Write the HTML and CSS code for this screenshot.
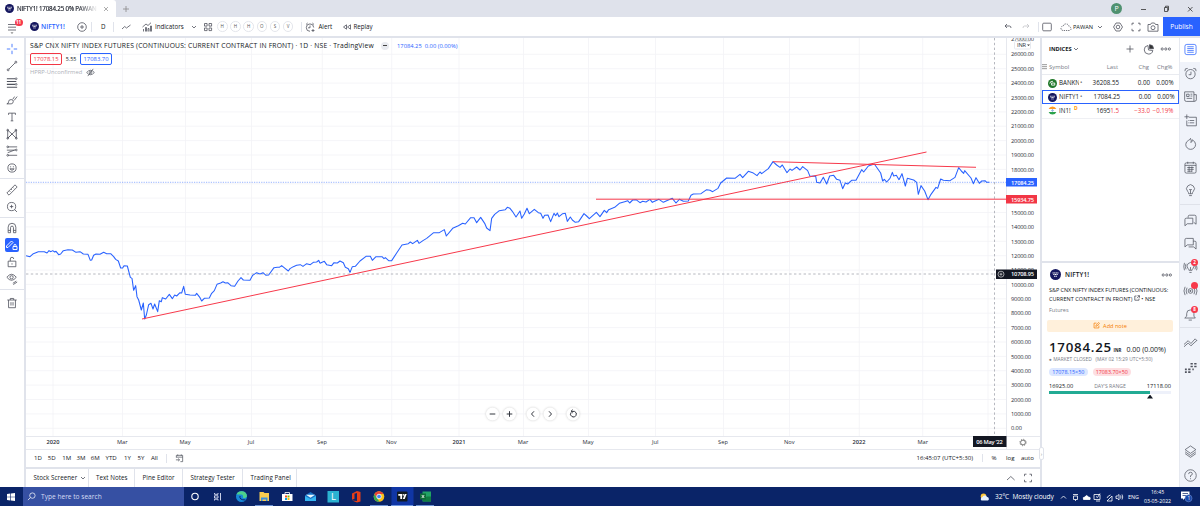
FILE: index.html
```html
<!DOCTYPE html>
<html lang="en">
<head>
<meta charset="utf-8">
<title>NIFTY1! 17084.25</title>
<link rel="stylesheet" href="styles.css">
</head>
<body>
<svg class="defs" aria-hidden="true">
  <symbol id="nifty" viewBox="0 0 10 10"><circle cx="5" cy="5" r="5" fill="#15175f"/><path d="M2.300 3.600h5.400M3 5h4M3.700 6.600h2.600" stroke="#fff" stroke-width=".9" stroke-dasharray="1.100 .35"/></symbol>
  <symbol id="chev" viewBox="0 0 6 6"><path d="M1 2l2 2 2-2"/></symbol>
  <symbol id="dots" viewBox="0 0 12 4"><circle cx="2.200" cy="2" r="1.100"/><circle cx="5.800" cy="2" r="1.100"/><circle cx="9.400" cy="2" r="1.100"/></symbol>
</svg>

<header class="tabs">
  <div class="tab"><svg class="s9"><use href="#nifty"/></svg><span class="tabname">NIFTY1! 17084.25 0% PAWAN</span><svg class="s6" viewBox="0 0 6 6"><path d="M1 1l4 4M5 1L1 5" stroke="#999"/></svg></div>
  <svg class="newtab" viewBox="0 0 8 8"><path d="M4 1v6M1 4h6"/></svg>
  <span class="avatar">P</span>
  <svg class="wins" viewBox="0 0 60 10"><path d="M3 5.500h5M26.500 3.500h3.200v4h-3.200zM27.500 3.500v-1.300h3v4h-.8M50 3l4.500 4.500M54.500 3L50 7.500"/></svg>
</header>

<nav class="toolbar">
  <span class="burger"><svg viewBox="0 0 16 14"><path d="M2 4.500h8M2 7.200h8M2 10h8"/><path d="M4.500 12.400h3l-1.500 1.400z" fill="#555" stroke="none"/></svg><b>11</b></span>
  <svg class="s9"><use href="#nifty"/></svg>
  <span class="sym">NIFTY1!</span>
  <svg class="s10" viewBox="0 0 10 10"><circle cx="5" cy="5" r="4.300"/><path d="M5 3v4M3 5h4"/></svg>
  <span class="bar center">D</span>
  <span class="bar center"><svg class="s10" viewBox="0 0 10 10"><path d="M1 7l2.700-2.500 1.800 1.500L9.500 3"/></svg></span>
  <span class="bar"><svg class="s10" viewBox="0 0 10 10"><path d="M1.500 9.500V7M3.500 9.500V5.500h1v4M6 9.500v-3h1v3M8.500 9.500V4h1v5.500M.5 5L4 2l2 1.500L9 .7"/></svg></span>
  <span class="ind">Indicators</span>
  <svg class="s6"><use href="#chev"/></svg>
  <svg class="s10" viewBox="0 0 10 10"><path d="M1.500 1.500h2.600v2.600H1.500zM6 1.500h2.600v2.600H6zM1.500 6h2.600v2.600H1.500zM6 6h2.600v2.600H6z"/></svg>
  <i>H</i><i>H</i><i>H</i><i>O</i><i>S</i><i>V</i>
  <span class="bar"><svg class="s10" viewBox="0 0 10 10"><path d="M5 9.300A3.700 3.700 0 1 1 8.700 5.500M5 3.500v2.300h-2M1 2.500L2.600 1M9 2.500L7.400 1M8 7v3M6.500 8.500h3"/></svg></span>
  <span class="alert">Alert</span>
  <svg class="s10" viewBox="0 0 10 10"><path d="M4.500 2.800v4.400L1.500 5zM8.500 2.800v4.400L5.500 5z"/></svg>
  <span class="replay">Replay</span>
  <svg class="s10" viewBox="0 0 10 10"><path d="M4 2L2 4l2 2M2 4h4.500q1.500 0 1.500 2"/></svg>
  <svg class="s10 faint" viewBox="0 0 10 10"><path d="M6 2l2 2-2 2M8 4H3.500Q2 4 2 6"/></svg>
  <span class="bar"><svg class="s10" viewBox="0 0 10 10"><rect x=".7" y="1.200" width="8.600" height="7.600" rx="1"/></svg></span>
  <svg class="cloud" viewBox="0 0 12 10"><path d="M3 8.500Q.7 8 1 6t2.400-2Q4 1.500 6.500 2t2.500 2.700q2 .3 2 2T9 8.500z" stroke-dasharray="1.300 .9"/></svg>
  <span class="pawan">PAWAN</span>
  <svg class="s6"><use href="#chev"/></svg>
  <svg class="s10" viewBox="0 0 10 10"><path d="M3 1h4l2.500 4L7 9H3L.5 5z"/><circle cx="5" cy="5" r="1.800"/></svg>
  <svg class="s10" viewBox="0 0 10 10"><path d="M1 3.200V1.200h2M7 1.200h2v2M9 6.800v2H7M3 8.800H1v-2"/></svg>
  <svg class="cam" viewBox="0 0 12 10"><path d="M1 2.500h2.500l1-1.500h3l1 1.500H11v6.700H1z"/><circle cx="6" cy="5.700" r="2"/></svg>
  <a class="publish">Publish</a>
</nav>

<main>
  <aside class="tools">
    <svg class="blue" viewBox="0 0 14 14"><path d="M7 1v4M7 9v4M1 7h4M9 7h4"/></svg>
    <svg viewBox="0 0 14 14"><path d="M3.300 10.700l7.400-7.400"/><circle cx="2.500" cy="11.500" r="1.100"/><circle cx="11.500" cy="2.500" r="1.100"/></svg>
    <svg viewBox="0 0 14 14"><path d="M1 2h9.500M1 5.300h11M1 8.600h9.500M1 12h12" stroke-width="1.200"/><circle cx="11.800" cy="2" r="1"/><circle cx="11.800" cy="8.600" r="1"/></svg>
    <svg viewBox="0 0 14 14"><path d="M1 11.500q2 0 2-2.500t3-2.500 2.500 2.500-2.500 2.500zM8 6l2-3M9.500 7.500L13 3"/></svg>
    <svg viewBox="0 0 14 14"><path d="M3 4.500v-2h8v2M7 2.500v9M5.500 11.500h3"/></svg>
    <svg viewBox="0 0 14 14"><path d="M2 12V2.500L7 7l5-4.500V12L7 7zM2 12L7 7"/><circle cx="2" cy="2.500" r="1"/><circle cx="11.500" cy="2.500" r="1"/><circle cx="2" cy="12" r="1"/><circle cx="12" cy="12" r="1"/></svg>
    <svg viewBox="0 0 14 14"><path d="M2.500 2.200H13M2.500 12H13M2 9l9-3.500M1 6h9" /><circle cx="2" cy="2.200" r="1"/><circle cx="2" cy="12" r="1"/><circle cx="12" cy="5.800" r="1"/></svg>
    <svg viewBox="0 0 14 14"><circle cx="7" cy="7" r="4.800"/><path d="M4.500 8q2.500 3.500 5 0zM5.400 5v1.200M8.600 5v1.200"/></svg>
    <hr>
    <svg viewBox="0 0 14 14"><path d="M1 10.500L10.500 1 13 3.500 3.500 13zM4 8l1 1M6 6l1 1M8 4l1 1"/></svg>
    <svg viewBox="0 0 14 14"><circle cx="6.500" cy="6.500" r="4.800"/><path d="M4.500 6.500h4M6.500 4.500v4M10 10l2.800 2.800"/></svg>
    <hr>
    <svg viewBox="0 0 14 14"><path d="M2.500 12.500V6a4.500 4.500 0 0 1 9 0v6.500H8.700V6.500a1.700 1.700 0 0 0-3.400 0v6zM2.500 9.800h2.800M8.700 9.800h2.800"/></svg>
    <svg class="on" viewBox="0 0 14 14"><path d="M1.500 8l5-5 1.500 1.500-5 5H1.500zM8 8.500h4v3H8zM9 8.500V7.300a1 1 0 0 1 2 0v1.200"/></svg>
    <svg viewBox="0 0 14 14"><path d="M2.500 6h9v6.500h-9zM5 6V3.500a2 2 0 0 1 4 0M7 8.500v1.500"/></svg>
    <svg viewBox="0 0 14 14"><path d="M1 5q5.500-7 11 0-5.500 7-11 0zM8 12l4-2.500M8.500 13.500l4.500-3"/><circle cx="6.500" cy="5" r="1.900"/></svg>
    <hr>
    <svg class="bin" viewBox="0 0 14 14"><path d="M1.500 3.500h11M3 3.500V12.500h8V3.500M5 3.500V1.700h4v1.800M5.800 6v4M8.200 6v4"/></svg>
  </aside>

  <section class="center-col">
    <div class="plot">
      <svg class="chart" viewBox="26 38 1014 411">
        <path class="grid" d="M26 413.900H1006M26 399.500H1006M26 385.100H1006M26 370.700H1006M26 356.400H1006M26 342H1006M26 327.600H1006M26 313.200H1006M26 298.800H1006M26 284.400H1006M26 270.100H1006M26 255.700H1006M26 241.300H1006M26 226.900H1006M26 212.500H1006M26 198.100H1006M26 183.800H1006M26 169.400H1006M26 155H1006M26 140.600H1006M26 126.200H1006M26 111.900H1006M26 97.500H1006M26 83.100H1006M26 68.700H1006M26 54.300H1006M26 428.300H1006"/>
        <path class="grid" d="M53 38V436M122.500 38V436M185.500 38V436M251.500 38V436M322.300 38V436M391.700 38V436M459 38V436M523.500 38V436M588.500 38V436M655.500 38V436M723.500 38V436M789.500 38V436M859.300 38V436M922.700 38V436M988 38V436"/>
        <path class="frame" d="M1006.500 38V449M26 436.500H1040"/>
        <path class="last" d="M26 182.300H1006"/>
        <path class="cross" d="M26 274H1006M994.500 38V436"/>
        <g class="price">
          <polyline transform="translate(0 230) scale(.33333)" points="78,77 90,80 100,71 115,65 133,65 141,69 147,62 153,65 158,62 164,66 168,64 176,74 182,72 190,62 204,59 217,60 228,67 240,65 250,72 264,73 271,91 275,90 281,76 288,72 300,73 311,67 320,71 332,71 341,80 347,88 355,93 362,114 368,114 372,107 382,108 391,142 396,145 401,181 407,167 411,200 416,210 424,240 430,219 434,267 439,255 446,224 453,220 459,237 464,222 473,245 478,212 484,215 487,203 497,207 508,193 517,206 524,195 530,198 540,188 545,189 551,169 556,193 570,195 586,196 590,190 600,203 605,213 613,205 628,204 635,190 643,182 651,163 662,159 669,155 676,159 683,158 693,167 704,169 714,153 723,143 730,150 750,151 758,136 770,128 780,132 789,128 798,136 806,135 822,113 832,112 838,112 845,107 855,115 865,123 870,116 880,110 890,106 901,104 909,109 920,101 931,104 940,97 950,96 956,91 960,100"/>
          <polyline transform="translate(320 180) scale(.33333)" points="0,250 13,244 20,254 35,257 42,248 52,249 60,243 70,248 76,262 85,266 90,277 97,260 106,259 120,243 138,229 151,229 157,241 168,230 186,230 192,236 196,233 206,242 215,242 230,219 246,195 265,191 271,186 278,191 292,181 297,190 310,181 320,175 341,158 358,158 373,149 379,168 398,145 415,137 428,130 436,132 452,113 462,113 470,128 482,112 494,130 500,144 510,152 515,115 524,103 538,92 556,89 562,82 570,85 577,94 588,111 600,93 605,115 613,102 621,85 628,101 643,88 655,98 662,100 669,115 674,106 684,105 692,125 702,100 707,107 712,99 717,110 728,101 736,100 742,124 751,111 757,120 766,127 776,125 792,101 800,108 808,116 829,97 840,110 853,91 860,98 866,89 884,82 898,70 914,65 923,62 929,69 938,60 948,59 960,68 968,64 978,66 990,58"/>
          <polyline transform="translate(620 140) scale(.33333)" points="90,178 97,187 107,182 117,178 130,187 140,182 157,175 168,189 178,178 190,184 205,183 213,166 220,162 243,161 260,149 270,151 278,155 294,145 302,129 320,114 345,115 360,103 368,113 385,94 398,98 411,107 420,96 425,101 445,86 459,65 470,75 480,82 487,75 501,98 510,87 516,91 530,81 540,90 548,80 563,92 570,109 587,108 590,127 600,129 610,112 620,132 629,108 641,106 650,118 660,121 668,146 676,129 683,132 695,121 708,121 725,89 731,96 745,78 763,72 782,99 788,123 793,118 800,126 810,115"/>
          <polyline transform="translate(820 140) scale(.33333)" points="210,115 217,97 221,108 229,106 237,119 246,101 256,138 262,115 281,120 290,127 295,163 303,137 314,153 324,179 333,163 348,142 353,145 362,117 370,121 390,122 405,112 416,83 424,93 431,100 434,92 453,114 460,131 468,113 478,130 485,123 495,122 500,127 508,127"/>
          <polyline transform="translate(0 230) scale(.33333)" points="960,100 960,100"/>
        </g>
        <path class="trend" d="M142 319L926.500 152M773 161.700L976 167.300M596 199.200H1006"/>
        <g class="axis">
          <text x="1011" y="41" textLength="23">27000.00</text>
          <text x="1011" y="56.400" textLength="23">26000.00</text><text x="1011" y="70.800" textLength="23">25000.00</text><text x="1011" y="85.200" textLength="23">24000.00</text><text x="1011" y="99.600" textLength="23">23000.00</text><text x="1011" y="114" textLength="23">22000.00</text><text x="1011" y="128.400" textLength="23">21000.00</text><text x="1011" y="142.800" textLength="23">20000.00</text><text x="1011" y="157.200" textLength="23">19000.00</text><text x="1011" y="171.600" textLength="23">18000.00</text>
          <text x="1011" y="214.700" textLength="23">15000.00</text><text x="1011" y="229.100" textLength="23">14000.00</text><text x="1011" y="243.500" textLength="23">13000.00</text><text x="1011" y="257.900" textLength="23">12000.00</text><text x="1011" y="272.300" textLength="23">11000.00</text><text x="1011" y="286.700" textLength="23">10000.00</text>
          <text x="1011" y="301" textLength="20">9000.00</text><text x="1011" y="315.400" textLength="20">8000.00</text><text x="1011" y="329.800" textLength="20">7000.00</text><text x="1011" y="344.200" textLength="20">6000.00</text><text x="1011" y="358.600" textLength="20">5000.00</text><text x="1011" y="373" textLength="20">4000.00</text><text x="1011" y="387.300" textLength="20">3000.00</text><text x="1011" y="401.700" textLength="20">2000.00</text><text x="1011" y="416.100" textLength="20">1000.00</text><text x="1011" y="430.300" textLength="11">0.00</text>
        </g>
        <rect x="1014.500" y="41.500" width="16" height="7.500" rx="1" fill="#fff" stroke="#e0e3eb"/>
        <text class="inr" x="1017" y="47.300" textLength="9">INR</text><path d="M1027 44.500h3l-1.500 1.500z" fill="#333"/>
        <rect x="1006" y="178" width="31" height="8.500" fill="#2962ff"/><text class="tag" x="1011" y="184.500" textLength="23">17084.25</text>
        <rect x="1006" y="195" width="31" height="8.500" fill="#f23645"/><text class="tag" x="1011" y="201.500" textLength="23">15934.75</text>
        <rect x="996" y="269.500" width="41" height="9.500" fill="#131722"/><circle cx="1001" cy="274.200" r="3" fill="none" stroke="#fff" stroke-width=".6"/><path d="M999.500 274.200h3M1001 272.700v3" stroke="#fff" stroke-width=".6"/><text class="tag" x="1011" y="276.400" textLength="23">10708.95</text>
        <g class="axis mid">
          <text class="yr" x="53" y="444.200">2020</text><text x="122.300" y="444.200">Mar</text><text x="185" y="444.200">May</text><text x="251" y="444.200">Jul</text><text x="322" y="444.200">Sep</text><text x="391.300" y="444.200">Nov</text><text class="yr" x="459" y="444.200">2021</text><text x="523" y="444.200">Mar</text><text x="588" y="444.200">May</text><text x="655.300" y="444.200">Jul</text><text x="723" y="444.200">Sep</text><text x="789.300" y="444.200">Nov</text><text class="yr" x="859" y="444.200">2022</text><text x="922.700" y="444.200">Mar</text>
        </g>
        <rect x="973" y="436" width="33.500" height="11" fill="#131722"/><text class="tag" x="976.300" y="444.200" textLength="26.500">06 May '22</text>
        <circle cx="1023" cy="442.500" r="2.400" fill="none" stroke="#555" stroke-width=".8"/><circle cx="1023" cy="442.500" r="3.200" fill="none" stroke="#555" stroke-width=".8" stroke-dasharray="1 1.510"/>
        <g class="pads"><circle cx="492.500" cy="414" r="6.500"/><circle cx="509.500" cy="414" r="6.500"/><circle cx="533" cy="414" r="6.500"/><circle cx="550" cy="414" r="6.500"/><circle cx="573" cy="414" r="6.500"/></g>
        <path class="padicons" d="M489.700 414h5.600M506.700 414h5.600M509.500 411.200v5.600M534 411.300l-2.500 2.700 2.500 2.700M549 411.300l2.500 2.700-2.500 2.700M571 412.500a2.900 2.900 0 1 0 3.500-1.100h-3M572.700 409.700l-1.700 1.600 1.700 1.600"/>
      </svg>
      <div class="legend">
        <div class="l1"><span class="name">S&amp;P CNX NIFTY INDEX FUTURES (CONTINUOUS: CURRENT CONTRACT IN FRONT) · 1D · NSE · TradingView</span><em></em><span class="val">17084.25&nbsp; 0.00 (0.00%)</span></div>
        <div class="l2"><span class="sell">17078.15</span><span class="spread">5.55</span><span class="buy">17083.70</span></div>
        <div class="l3"><span>HPRP-Unconfirmed</span><svg class="s9" viewBox="0 0 10 10"><path d="M.7 5q4.300-5 8.600 0-4.300 5-8.600 0zM2 9l6-8"/><circle cx="5" cy="5" r="1.400"/></svg></div>
      </div>
    </div>
    <div class="ranges">
      <span>1D</span><span>5D</span><span>1M</span><span>3M</span><span>6M</span><span>YTD</span><span>1Y</span><span>5Y</span><span>All</span>
      <span class="goto"><svg class="s9" viewBox="0 0 10 10"><path d="M1.500 4V1.500h7v7H6M1.500 3.500h7M3 .5v1.500M7 .5v1.500M1 6.500h4M3.500 5L5 6.500 3.500 8"/></svg></span>
      <span class="clock">16:45:07 (UTC+5:30)</span><span class="scale">%</span><span>log</span><span>auto</span>
    </div>
    <div class="panels">
      <span>Stock Screener<svg class="s6"><use href="#chev"/></svg></span><span>Text Notes</span><span>Pine Editor</span><span>Strategy Tester</span><span>Trading Panel</span>
      <svg class="pico" viewBox="0 0 30 10"><path d="M2 7l3.800-3.500L9.600 7M19.500 3.200v-2h2M24.500 1.200h2v2M26.500 6.800v2h-2M21.500 8.800h-2v-2"/></svg>
    </div>
  </section>

  <section class="side">
    <div class="watch">
      <div class="whead"><b>INDICES</b><svg class="s6"><use href="#chev"/></svg><svg class="plus" viewBox="0 0 8 8"><path d="M4 .5v7M.5 4h7"/></svg><svg class="s11" viewBox="0 0 11 11"><path d="M5 1.500a4.300 4.300 0 1 0 4.800 5L5.500 6z"/><path d="M6.500.7v4h4A4 4 0 0 0 6.500.7z" fill="#333"/></svg><svg class="more"><use href="#dots"/></svg></div>
      <div class="row cols"><span class="grip"></span><span class="cs">Symbol</span><span>Last</span><span>Chg</span><span>Chg%</span></div>
      <div class="row"><svg class="s9" viewBox="0 0 10 10"><circle cx="5" cy="5" r="5" fill="#22792b" stroke="none"/><path d="M2 5q0-2.500 3.500-2.500M4 4.500h3.500v2.300H4z" fill="none" stroke="#fff" stroke-width="1"/></svg><span class="n">BANKN</span><span class="d">•</span><span>36208.55</span><span>0.00</span><span>0.00%</span></div>
      <div class="row sel"><svg class="s9"><use href="#nifty"/></svg><span class="n">NIFTY1</span><span class="d">•</span><span>17084.25</span><span>0.00</span><span>0.00%</span></div>
      <div class="row last-row"><svg class="s9" viewBox="0 0 10 10"><path d="M.7 3.400a4.600 4.600 0 0 1 8.600 0z" fill="#ff9b26" stroke="none"/><path d="M.7 6.600a4.600 4.600 0 0 0 8.600 0z" fill="#2ba24c" stroke="none"/><circle cx="5" cy="5" r=".8" stroke="#4b80c9"/></svg><span class="n">IN1!</span><sup>D</sup><span>1695<span class="red">1.5</span></span><span class="red">−33.0</span><span class="red">−0.19%</span></div>
    </div>
    <div class="detail">
      <div class="dhead"><svg class="s11"><use href="#nifty"/></svg><b>NIFTY1!</b><svg class="more"><use href="#dots"/></svg></div>
      <p class="desc"><span class="da">S&amp;P CNX NIFTY INDEX FUTURES (CONTINUOUS:</span><span class="db">CURRENT CONTRACT IN FRONT) <svg class="ext" viewBox="0 0 6 6"><path d="M2.500 1H.8v4.200H5V3.500M3.500.7h2v2M5.500.7L3 3.200"/></svg> • NSE</span></p>
      <p class="kind">Futures</p>
      <div class="note"><svg class="s7" viewBox="0 0 8 8"><path d="M4 1.300H1.200v5.500h5.500V4M3.200 5l.3-1.500L6.500.6l1 1-3 3z"/></svg>Add note</div>
      <div class="quote"><b>17084.25</b><small>INR</small><span>0.00 (0.00%)</span></div>
      <p class="closed">● MARKET CLOSED &nbsp; (MAY 02 15:29 UTC+5:30)</p>
      <div class="ba"><span class="bid">17078.15×50</span><span class="ask">17083.70×50</span></div>
      <div class="dr"><span>16925.00</span><span class="drn">DAY'S RANGE</span><span>17118.00</span></div>
      <div class="meter"><div style="width:82.500%"></div></div>
      <div class="ptr"></div>
    </div>
    <span class="handle">›</span>
  </section>

  <aside class="rail">
    <span class="act"><svg class="blue" viewBox="0 0 14 14"><rect x="1" y="1.500" width="12" height="11" rx="2"/><path d="M3.500 4h7M3.500 6h7M3.500 8h7M3.500 10h7"/></svg></span>
    <span><svg viewBox="0 0 14 14"><circle cx="7" cy="7.700" r="5"/><path d="M7.500 5v3.300H5M1 4.500q-.5-3.500 3-3M13 4.500q.5-3.500-3-3"/></svg></span>
    <span><svg viewBox="0 0 14 14"><path d="M.7 2h10v10.300H2.500Q.7 12.300.7 10.500zM10.700 5h2.600v5.500q0 1.800-2.600 1.800M2.800 4.500h2.700V7H2.800zM7 4.500h2M7 6.500h2M2.800 9h6"/></svg></span>
    <span><svg viewBox="0 0 14 14"><path d="M5.500 3.500h7.800v9.200H3V7M3 .5v5M.5 3h5M6 7h5M6 9.500h5M4.500 7h.6M4.500 9.500h.6"/></svg></span>
    <span><svg viewBox="0 0 14 14"><path d="M7 1.500q1.300 2.500.5 4.500 1.500-1 1.500-3 3.500 2 3.500 5a5.300 5.300 0 0 1-10.600 0q0-3 3.100-4.500Q6.500 3 7 1.500z"/></svg></span>
    <span><svg viewBox="0 0 14 14"><rect x="1" y="2" width="12" height="11" rx="1.500"/><path d="M1 4.700h12M4 .8V3M10 .8V3M3.500 7h7M3.500 9h7M3.500 11h5" stroke-dasharray="none"/><path d="M5.500 5.800v6M8.500 5.800v6"/></svg></span>
    <span><svg viewBox="0 0 14 14"><path d="M5 10.500Q5 9 4 8a4.200 4.200 0 1 1 6 0q-1 1-1 2.500zM5.500 12.500h3M7 6.500v4M5.500 6h3"/></svg></span>
    <hr>
    <span class="first"><svg viewBox="0 0 14 14"><path d="M4.500 4V2.800q0-1.500 1.500-1.500h5.500q1.500 0 1.500 1.500V11l-2.500-2M1 12.700V6q0-1.500 1.500-1.500h7v6H3.500z"/></svg></span>
    <span><svg viewBox="0 0 14 14"><path d="M1 10.700V3q0-1.500 1.500-1.500H10v7H3.500zM10 4.500h1.700q1.300 0 1.300 1.300V13l-2.500-2.300H5"/></svg></span>
    <span class="badge"><svg viewBox="0 0 14 14"><path d="M5.300 10Q5.300 9 4.300 8a3.700 3.700 0 1 1 5.400 0q-1 1-1 2zM5.800 12.300h2.400M7 6.500V9.500M2.200 3q-1.500 3 0 6M.5 2q-1.500 4 0 8M11.800 5q1 2 0 4M13.500 5q1 3 0 5"/></svg><b>2</b></span>
    <span class="badge"><svg viewBox="0 0 14 14"><circle cx="7" cy="7.500" r="2.500"/><path d="M6.400 6.700v1.600l1.400-.8zM3.300 4q-2 3.500 0 7M1.200 3q-2.500 4.500 0 9M10.700 4q2 3.500 0 7M12.800 3q2.500 4.500 0 9"/></svg><b></b></span>
    <span class="badge"><svg viewBox="0 0 14 14"><path d="M.8 10.800h11.400L10.700 8.800V6a3.900 3.900 0 0 0-7.800 0v2.800zM5 13h3.500"/></svg><b>8</b></span>
    <hr>
    <span class="first"><svg viewBox="0 0 14 14"><path d="M0 8l4.500-4 3 3L12 2l2 2M0 10.500L4.500 6.500l3 3L14 3.500"/></svg></span>
    <span><svg viewBox="0 0 14 14"><path d="M1 12h2M4.500 12h2.500M1 9h2M4.500 9h2.500M7 3h2.500M11 3h2.500M7 6h2.500M11 6h2.500M9 9h1.500" stroke-width="1.700"/></svg></span>
    <span class="layers"><svg viewBox="0 0 14 14"><path d="M7 1l5.800 4L7 9 1.200 5zM1.200 7.300L7 11.300l5.800-4M1.200 9.300L7 13.300l5.800-4"/></svg></span>
    <span><svg viewBox="0 0 14 14"><circle cx="7" cy="7" r="6.200"/><path d="M5 5.500q0-2 2-2t2 1.700Q9 6.500 7 7.200v1.500M7 10v1"/></svg></span>
  </aside>
</main>

<footer class="taskbar">
  <svg class="win" viewBox="0 0 9 9"><path d="M0 1.200l3.800-.6v3.600H0zM4.500.5L9 0v4.200H4.500zM0 4.900h3.800v3.600L0 7.900zM4.500 4.900H9V9l-4.500-.5z" fill="#fff" stroke="none"/></svg>
  <div class="search"><svg class="s9" viewBox="0 0 10 10"><circle cx="6" cy="4" r="3"/><path d="M3.800 6.200L1 9"/></svg>Type here to search</div>
  <svg class="apps" viewBox="184 487 256 19">
    <circle cx="195" cy="496.500" r="3.200" stroke="#fff" stroke-width="1.100"/>
    <path d="M214.500 493v1.300h3.500V493M214.500 500.500v-1.300h3.500v1.300M214.500 495.800h3.500v2.200h-3.500zM220.500 493v7.500" stroke="#dce2f5" stroke-width=".9"/>
    <circle cx="241.500" cy="496.500" r="5.500" fill="#1788d8"/><path d="M236.500 494.500a5.500 5.500 0 0 1 10.500 2q-1 2-4 1.200.5-3.200-2-3.200t-4.500 0z" fill="#4ed08a"/><path d="M240 496q-1 4 5.500 4" stroke="#0a2468" stroke-width="1"/>
    <path d="M259.500 492h4l1 1h4.500v8h-9.500z" fill="#f8cb50"/><path d="M261 497.500h6.500v3.500h-1.500v-1.500h-3.500v1.500H261z" fill="#3c8fdd"/>
    <path d="M282 494h10.500v7H282z" fill="#fff"/><path d="M285 494v-1.500h4.500v1.500" stroke="#fff"/><path d="M285 495.500h2v2h-2z" fill="#f25022"/><path d="M287.500 495.500h2v2h-2z" fill="#7fba00"/><path d="M285 498h2v2h-2z" fill="#00a4ef"/><path d="M287.500 498h2v2h-2z" fill="#ffb900"/>
    <path d="M305 495.500l5.500-3.500 5.500 3.500v5.500h-11z" fill="#1671c6"/><path d="M305 496l5.500 3 5.500-3v5h-11z" fill="#35b5f2"/><path d="M306 494.800h9l-4.500 3z" fill="#eaf7ff"/>
    <rect x="327.500" y="491" width="11.500" height="11.500" fill="#2bb2d1"/><text x="331" y="500.200">L</text>
    <path d="M352 493.500l5-2.500 3.500 1v9.500l-3.500 1-5-2 5 .5v-8l-2.500.8v5l-2.500 1z" fill="#e63e18"/>
    <circle cx="379" cy="496.500" r="5.300" fill="#fbc116"/><path d="M374.400 493.900a5.300 5.300 0 0 1 9.200 0H379l-2.300 4z" fill="#e94335"/><path d="M374.400 493.900l2.500 4.300 2.600 3.600a5.300 5.300 0 0 1-5.100-7.900z" fill="#34a853"/><circle cx="379" cy="496.500" r="2.300" fill="#4285f4" stroke="#fff" stroke-width=".8"/>
    <rect x="391.500" y="487" width="22" height="19" fill="#1036a5"/><rect x="397" y="491.500" width="10.500" height="10" rx="1" fill="#111a22"/><path d="M398.300 494h3.800v5h-1.800v-3.200h-2zM404.700 494h2l-2 5h-1.800z" fill="#fff"/><circle cx="403.300" cy="494.900" r=".8" fill="#fff"/>
    <path d="M422.500 491.500h8.500v10h-8.500z" fill="#21a366"/><path d="M427 496.500h4v5h-8v-3z" fill="#107c41"/><path d="M420 493.500h6v6h-6z" fill="#0d6b38"/><path d="M421.800 495l2.400 3M424.200 495l-2.400 3" stroke="#fff" stroke-width=".8"/>
    <path d="M255 505.500h18M370 505.500h18M391 505.500h22M416 505.500h18" stroke="#86b0ef"/>
  </svg>
  <svg class="weather" viewBox="0 0 10 8"><circle cx="3.500" cy="3.300" r="2.800" fill="#ffc83c"/><path d="M1.500 7.500a2 2 0 0 1 1-3.500 2.500 2.500 0 0 1 4.500 0 1.900 1.900 0 0 1 1 3.500z" fill="#e5f1ff"/></svg>
  <span class="wx">32°C&nbsp; Mostly cloudy</span>
  <svg class="tray" viewBox="0 0 64 10"><path d="M1 6.500L3.500 4 6 6.500M13 2.500h5M13.500 4h4v3.500h-4zM15.500 7.500V9M34 2.500h6v5h-6zM36 9h4M36 4.500l1.500 1L40 1.500M47 9l5-5v5zM47 6q1-2.500 3.500-3M56 4v2.500h1.300L59 8V2.500L57.300 4zM60.500 3.500q1 1.500 0 3M62 2.500q1.500 2.500 0 5"/><path d="M23.500 7.500q-1-2.500 1.300-2.500 1.700-3 3.700 0 2.500 0 1.500 2.500z" fill="#fff"/></svg>
  <span class="eng">ENG</span>
  <span class="time">16:45<br>03-05-2022</span>
  <svg class="notif" viewBox="0 0 13 14"><path d="M1 1.500h8.500v7H4.500L3 10V8.500H1z" fill="#fff" stroke="none"/><path d="M2.500 3.500h5.500M2.500 5.500h4" stroke="#0a2468" stroke-width=".7"/><circle cx="8.500" cy="8.300" r="3.500" fill="#1b48a8" stroke="#7d9ddd" stroke-width=".5"/><text x="7.400" y="10.200">1</text></svg>
</footer>
</body>
</html>
```
FILE: styles.css
```css
* { box-sizing: border-box; }
body { margin: 0; width: 1200px; height: 506px; overflow: hidden; background: #fff; color: #131722; font: 6.2px/8px "Open Sans", "Noto Sans", sans-serif; display: flex; flex-direction: column; white-space: nowrap; }
svg { display: block; flex: none; fill: none; stroke: #50535e; stroke-width: .8; }
p { margin: 0; }
i, em { font-style: normal; }
hr { border: 0; border-top: 1px solid #e0e3eb; margin: 0; width: 100%; }
.defs { position: absolute; width: 0; height: 0; }
use[href="#nifty"] { stroke: none; }
.s6 { width: 6px; height: 6px; } .s7 { width: 7px; height: 7px; } .s9 { width: 9px; height: 9px; } .s10 { width: 10px; height: 10px; } .s11 { width: 11px; height: 11px; }
.blue { stroke: #2962ff; } .red { color: #f23645; } .faint { opacity: .35; }

.tabs { height: 17px; background: #dfe2eb; display: flex; align-items: center; flex: none; }
.tab { width: 116px; height: 17px; background: #fff; border-radius: 0 3px 0 0; display: flex; align-items: center; padding-left: 5px; }
.tabname { width: 81px; margin: 0 5px 0 3px; letter-spacing: -.16px; font-weight: 500; -webkit-text-stroke: .15px #131722; overflow: hidden; -webkit-mask-image: linear-gradient(90deg, #000 75%, transparent); mask-image: linear-gradient(90deg, #000 75%, transparent); }
.newtab { width: 8px; height: 8px; margin-left: 6px; stroke: #888; }
.avatar { width: 11px; height: 11px; border-radius: 50%; background: #4f9170; color: #fff; text-align: center; line-height: 11px; font-size: 7px; margin-left: 981px; }
.wins { width: 60px; height: 10px; margin-left: 16px; stroke: #333; }

.toolbar { height: 21px; flex: none; border-bottom: 2px solid #e0e3eb; display: grid; grid-template-columns: 30px 11px 36px 17px 22px 25px 14px 36px 12px 14px repeat(5, 13.200px) 21px 14.500px 24px 11px 649.500px 18px 20px 19px 13px 24px 16px 18px 16px 16px 1fr; align-items: center; }
.burger { position: relative; }
.burger svg { width: 16px; height: 14px; margin-left: 6px; }
.burger b { position: absolute; left: 14.500px; top: -1px; width: 8px; height: 7px; border-radius: 4px; background: #f7394b; color: #fff; font-size: 4.500px; line-height: 7px; text-align: center; }
.sym { color: #2962ff; font-weight: 600; font-size: 6.600px; }
.bar { border-left: 1px solid #e0e3eb; height: 10px; line-height: 10px; padding-left: 3px; margin-left: -3px; }
.bar.center { padding-left: 9px; }
.bar.center + .bar.center { padding-left: 7px; }
.bar.center + .bar:not(.center) { border-left-color: transparent; }
.toolbar i { width: 10.500px; height: 10.500px; border: 1px solid #e4e6ec; border-radius: 50%; text-align: center; font-size: 4.500px; line-height: 8.500px; color: #555; }
.alert, .replay, .ind { font-size: 6.200px; }
.cloud, .cam { width: 12px; height: 10px; }
.pawan { font-size: 5.700px; }
.publish { align-self: stretch; background: #2962ff; color: #fff; line-height: 19px; text-align: center; font-size: 6.600px; }

main { display: grid; grid-template-columns: 26px 1014px 139px 21px; height: 449px; flex: none; }
.tools { border-right: 2px solid #e0e3eb; display: flex; flex-direction: column; align-items: center; padding-top: 3px; }
.tools svg { width: 12px; height: 12px; margin: 2.400px 0 2.520px; stroke-width: .95; }
.tools hr { margin: 1.500px 0 2.500px; }
.tools .on { background: #2962ff; stroke: #fff; border-radius: 2px; width: 14px; height: 14px; margin: 1.400px 0 1.500px; }
.tools .bin { margin-top: 4px; }

.center-col { display: flex; flex-direction: column; min-width: 0; }
.plot { position: relative; height: 411px; }
.chart { width: 1014px; height: 411px; stroke: none; }
.grid { stroke: #f2f3f6; stroke-width: .8; }
.frame { stroke: #e6e8ee; stroke-width: 1; }
.last { stroke: #2962ff; stroke-width: .6; stroke-dasharray: 1.200 1.200; opacity: .8; }
.cross { stroke: #a3a6ae; stroke-width: .8; stroke-dasharray: 2.400 2.400; }
.price { stroke: #2962ff; stroke-width: 3.200; stroke-linejoin: round; }
.trend { stroke: #f7394b; stroke-width: 1; }
.axis text, .inr { fill: #2a2e39; font-size: 5.700px; }
.mid text { text-anchor: middle; }
.axis .yr { font-weight: 600; }
.tag { fill: #fff; font-size: 5.700px; font-weight: 600; }
.pads circle { fill: #fff; filter: drop-shadow(0 .5px 1px #ccc); }
.padicons { stroke: #33363f; stroke-width: 1; }
.legend { position: absolute; left: 4px; top: 2px; }
.l1, .l2, .l3 { display: flex; align-items: center; }
.l1 { height: 11px; }
.name { width: 344px; font-size: 6.750px; letter-spacing: .185px; }
.l1 em { width: 8px; height: 8px; border-radius: 50%; background: #e9ebf0; margin: 0 8px 0 7px; }
.l1 em::after { content: ""; display: block; width: 4px; height: 1px; margin: 3.500px 2px; background: #444; }
.val { color: #2962ff; font-size: 5.800px; }
.l2 { height: 14px; margin-top: 1px; }
.sell, .buy { width: 32px; height: 12px; line-height: 10.500px; text-align: center; border: 1px solid #f23645; color: #f23645; border-radius: 2px; font-size: 5.900px; }
.buy { border-color: #2962ff; color: #2962ff; }
.spread { width: 18px; text-align: center; font-size: 5.300px; }
.l3 { height: 12px; color: #adb0b8; gap: 4px; }
.l3 span { width: 52px; font-size: 5.800px; }

.ranges { height: 20px; border-top: 1px solid #e6e8ee; border-bottom: 2px solid #e0e3eb; display: grid; grid-template-columns: 13.700px 14.500px 14.300px 14.300px 14.700px 18.500px 13.500px 13.500px 15.500px 750px 75px 14.500px 15px 1fr; padding-left: 8px; padding-bottom: 1px; align-items: center; font-size: 6.100px; }
.goto, .scale { border-left: 1px solid #e0e3eb; padding-left: 8px; }
.scale { margin-left: -9px; }
.panels { height: 18px; display: flex; font-size: 6.200px; letter-spacing: .07px; }
.panels span { border-right: 1px solid #e0e3eb; line-height: 18px; padding: 0 7.500px; display: flex; align-items: center; gap: 3px; }
.panels span:nth-child(1) { width: 62.500px; padding-right: 0; } .panels span:nth-child(2) { width: 46.500px; } .panels span:nth-child(3) { width: 48px; } .panels span:nth-child(4) { width: 60px; } .panels span:nth-child(5) { width: 54px; }
.pico { width: 30px; height: 10px; margin: 4px 5px 0 auto; }

.side { position: relative; border-left: 2px solid #e0e3eb; display: flex; flex-direction: column; }
.handle { position: absolute; left: -3px; top: 409px; width: 5px; height: 13px; line-height: 12px; border: 1px solid #e0e3eb; border-radius: 2px; background: #fff; color: #888; text-align: center; font-size: 5px; }
.watch { height: 225px; border-bottom: 2px solid #e0e3eb; }
.whead { height: 22px; padding: 0 7px; display: flex; align-items: center; }
.whead b { width: 24px; font-size: 5.700px; }
.plus { width: 8px; height: 8px; margin: 0 9px 0 47px; }
.more { width: 12px; height: 4px; margin-left: auto; }
.row { height: 14.200px; display: grid; grid-template-columns: 11px 24px 5px 31px 31px 23.500px; padding-left: 6px; align-items: center; font-size: 6.200px; }
.row > span { text-align: right; }
.row > span.n { text-align: left; overflow: hidden; width: 19.500px; }
.row > span.d { text-align: left; color: #777; margin-left: -3px; }
.row sup { font-size: 5px; line-height: 5px; font-weight: 700; color: #ff9800; margin: -5px 0 0 -9px; }
.cols { height: 15px; border-bottom: 1px solid #e9ebf0; margin-bottom: 1px; grid-template-columns: 7px 33px 36px 31px 23.500px; padding-left: 0; color: #787b86; font-size: 5.900px; }
.row > span.cs { text-align: left; }
.grip { width: 5px; height: 6px; background: repeating-linear-gradient(#aaa 0 1px, #eee 1px 2px); }
.sel { border: 1px solid #2962ff; padding-left: 5px; }
.sel > :nth-last-child(-n+3) { margin-right: -1px; position: relative; }
.last-row { border-bottom: 1px solid #eff0f4; }
.detail { padding: 3px 6px; }
.dhead { height: 17px; display: flex; align-items: center; gap: 4px; margin-left: 2px; }
.dhead b { font-size: 6.400px; font-weight: 600; letter-spacing: .15px; }
.desc { font-size: 5.500px; line-height: 8.700px; height: 17.500px; margin: 3px 0 0 1px; }
.desc span { display: block; }
.da { letter-spacing: -.05px; }
.db { letter-spacing: .05px; }
.ext { display: inline; width: 6px; height: 6px; }
.kind { color: #787b86; font-size: 5.500px; margin: 2px 0 0 1px; }
.note { height: 12px; background: #fff0db; color: #f57c00; border-radius: 2px; display: flex; align-items: center; justify-content: center; gap: 3px; margin: 6px 0 0 -1px; font-size: 5.600px; width: 126px; }
.note svg { stroke: #f57c00; }
.quote { height: 18px; margin: 6px 0 0 1px; display: flex; align-items: baseline; line-height: 18px; }
.quote b { font-size: 13.300px; font-weight: 600; letter-spacing: .75px; width: 64.500px; }
.quote small { font-size: 4.300px; font-weight: 700; width: 13px; }
.quote span { font-size: 7px; }
.closed { color: #787b86; font-size: 4.900px; line-height: 6px; margin-left: 1px; }
.ba { display: flex; gap: 5px; margin: 6px 0 6px 1px; }
.ba span { width: 38.500px; height: 8.500px; border-radius: 4px; text-align: center; font-size: 5.400px; line-height: 8.500px; }
.bid { background: #dce7ff; color: #2962ff; } .ask { background: #fddfe2; color: #f23645; }
.dr { width: 122px; margin-left: 1px; display: flex; justify-content: space-between; font-size: 5.700px; }
.drn { color: #787b86; font-size: 5.100px; }
.meter { width: 122px; height: 2.500px; margin: 1px 0 0 1px; background: #eef1fa; }
.meter div { height: 100%; background: #22ab94; }
.ptr { width: 6px; height: 4px; margin: 1px 0 0 99px; background: #131722; clip-path: polygon(50% 0, 100% 100%, 0 100%); }

.rail { background: #f0f3fa; display: flex; flex-direction: column; border-left: 1px solid #e6e9f0; }
.rail span { height: 23.500px; display: grid; place-items: center; flex: none; position: relative; }
.rail svg { width: 13px; height: 13px; overflow: visible; }
.rail .act { background: #fff; }
.rail hr { border-color: #dfe2ea; margin: 1px 0 4px; }
.badge b { position: absolute; left: 11px; top: 3px; width: 7px; height: 7px; border-radius: 50%; background: #f7394b; color: #fff; text-align: center; font-size: 4.500px; line-height: 7px; }
.rail .layers { margin-top: auto; }

.taskbar { height: 19px; flex: none; background: #0a2468; color: #fff; display: flex; align-items: center; }
.taskbar svg { stroke: #fff; }
.win { width: 8px; height: 8px; margin: 0 8px 0 7px; }
.search { width: 161px; height: 19px; background: #3650a3; color: #d5dcf3; display: flex; align-items: center; gap: 5px; padding-left: 4px; font-size: 6.600px; }
.taskbar .apps { width: 256px; height: 19px; stroke: none; }
.apps text { fill: #fff; font-size: 9.500px; }
.taskbar .weather { width: 10px; height: 8px; margin-left: 540px; stroke: none; }
.wx { width: 65px; font-size: 6.600px; margin-left: 5px; letter-spacing: -.08px; }
.tray { width: 64px; height: 10px; margin-left: 0; }
.eng { font-size: 5.400px; width: 17px; margin-left: 4px; }
.time { font-size: 5.200px; line-height: 8.500px; width: 27px; margin-left: -1px; text-align: center; }
.notif { width: 13px; height: 14px; margin-left: 9px; }
.notif text { font-size: 5px; fill: #fff; stroke: none; }
```
